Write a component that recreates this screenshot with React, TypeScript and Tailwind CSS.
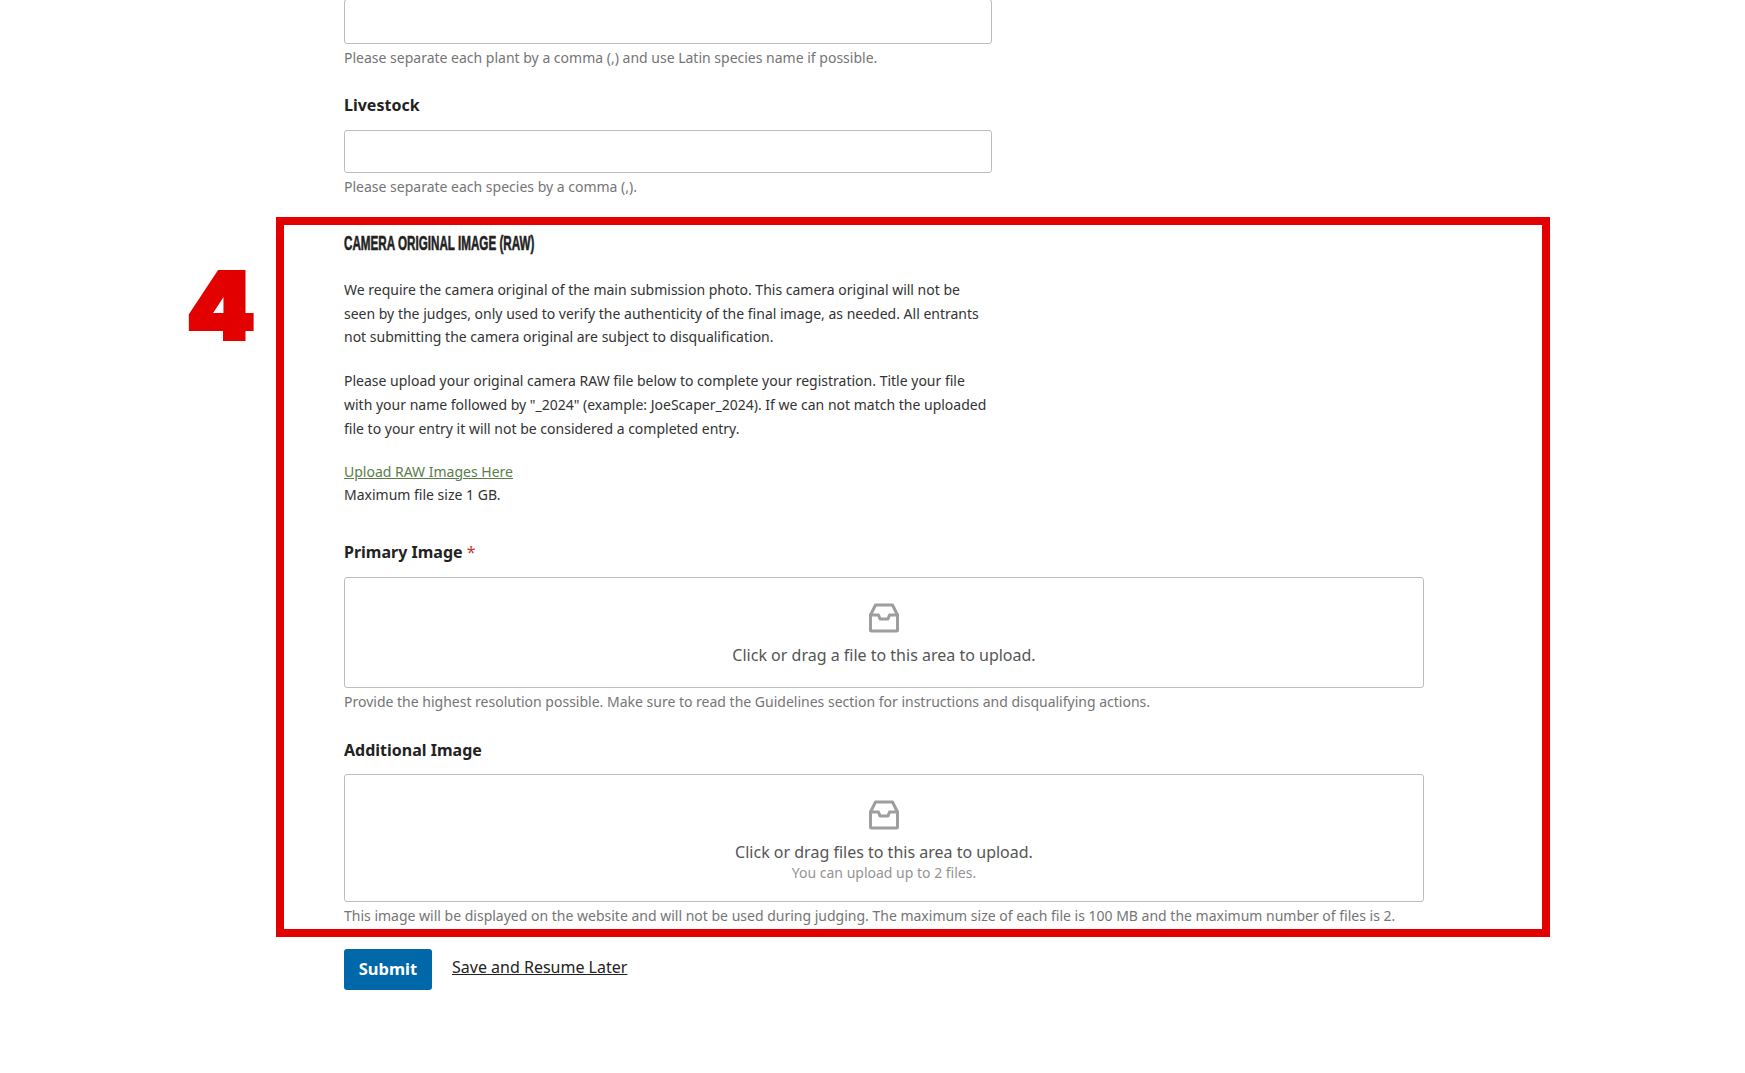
const Tray = () => (
  <svg width="32" height="32" viewBox="0 0 32 32" fill="none" stroke="#9e9e9e" strokeWidth="3" strokeLinejoin="round" strokeLinecap="round" className="block">
    <path d="M2.5 13 L7.5 3 H24.5 L29.5 13 V28 A1 1 0 0 1 28.500 29 H3.500 A1 1 0 0 1 2.500 28 Z" />
    <path d="M2.500 13 H10.500 L12 17 H20 L21.500 13 H29.500" />
  </svg>
);

const Help = ({ children, className = "" }: { children: React.ReactNode; className?: string }) => (
  <p className={`text-[14px] leading-[21px] text-[#757575] ${className}`}>{children}</p>
);

const Label = ({ children, className = "" }: { children: React.ReactNode; className?: string }) => (
  <div className={`text-[16px] leading-[24px] font-bold text-[#222222] ${className}`}>{children}</div>
);

const Drop = ({ title, sub, h }: { title: string; sub?: string; h: string }) => (
  <div className={`flex flex-col items-center border border-[#bdbdbd] rounded-[3px] w-[1080px] pt-[24px] ${h}`}>
    <Tray />
    <div className="mt-[9px] text-[16px] leading-[24px] text-[#555555]">{title}</div>
    {sub && <div className="text-[14px] leading-[17px] text-[#949494]">{sub}</div>}
  </div>
);

export default function App() {
  return (
    <div className="relative w-[1745px] h-[1073px] overflow-hidden bg-white font-['Noto_Sans',sans-serif]">
      <div className="pl-[344px] -mt-[1px]">
        <div className="w-[648px] h-[45px] border border-[#bdbdbd] rounded-[3px]" />
        <Help className="mt-[3px]">Please separate each plant by a comma (,) and use Latin species name if possible.</Help>
        <Label className="mt-[25px]">Livestock</Label>
        <div className="mt-[13px] w-[648px] h-[43px] border border-[#bdbdbd] rounded-[3px]" />
        <Help className="mt-[3px]">Please separate each species by a comma (,).</Help>

        <h2 className="mt-[33px] h-[26px] text-[21px] leading-[26px] font-bold uppercase text-[#222222] font-['Liberation_Sans',sans-serif] [-webkit-text-stroke:0.6px_#222222]">
          <span className="inline-block origin-left scale-x-[0.555] whitespace-nowrap">Camera Original Image (RAW)</span>
        </h2>

        <div className="mt-[22px] w-[648px] text-[14px] leading-[23.6px] text-[#333333]">
          <p>We require the camera original of the main submission photo. This camera original will not be seen by the judges, only used to verify the authenticity of the final image, as needed. All entrants not submitting the camera original are subject to disqualification.</p>
          <p className="mt-[20.6px]">Please upload your original camera RAW file below to complete your registration. Title your file with your name followed by "_2024" (example: JoeScaper_2024). If we can not match the uploaded file to your entry it will not be considered a completed entry.</p>
          <p className="mt-[19.6px]"><a className="underline text-[#5a7d4a]">Upload RAW Images Here</a></p>
          <p>Maximum file size 1 GB.</p>
        </div>

        <Label className="mt-[33.4px]">Primary Image <span className="font-normal text-[#cc3333]">*</span></Label>
        <div className="mt-[13px]"><Drop title="Click or drag a file to this area to upload." h="h-[111px]" /></div>
        <Help className="mt-[3px]">Provide the highest resolution possible. Make sure to read the Guidelines section for instructions and disqualifying actions.</Help>
        <Label className="mt-[25.5px]">Additional Image</Label>
        <div className="mt-[12.5px]"><Drop title="Click or drag files to this area to upload." sub="You can upload up to 2 files." h="h-[128px]" /></div>
        <Help className="mt-[3px]">This image will be displayed on the website and will not be used during judging. The maximum size of each file is 100 MB and the maximum number of files is 2.</Help>

        <div className="mt-[23px] flex items-start">
          <button className="w-[88px] h-[41px] rounded-[3px] bg-[#0068a8] text-white text-[16.5px] font-bold">Submit</button>
          <a className="ml-[20px] mt-[6px] text-[16px] leading-[24px] underline text-[#222222]">Save and Resume Later</a>
        </div>
      </div>

      <div className="absolute left-[276px] top-[217px] w-[1274px] h-[720px] border-[8px] border-[#e20000]" />
      <div className="absolute left-[187px] top-[260px] w-[68px] scale-x-[1.05] text-center text-[92px] leading-[92px] font-black text-[#e20000] font-['Inter',sans-serif] [-webkit-text-stroke:4px_#e20000]">4</div>
    </div>
  );
}
